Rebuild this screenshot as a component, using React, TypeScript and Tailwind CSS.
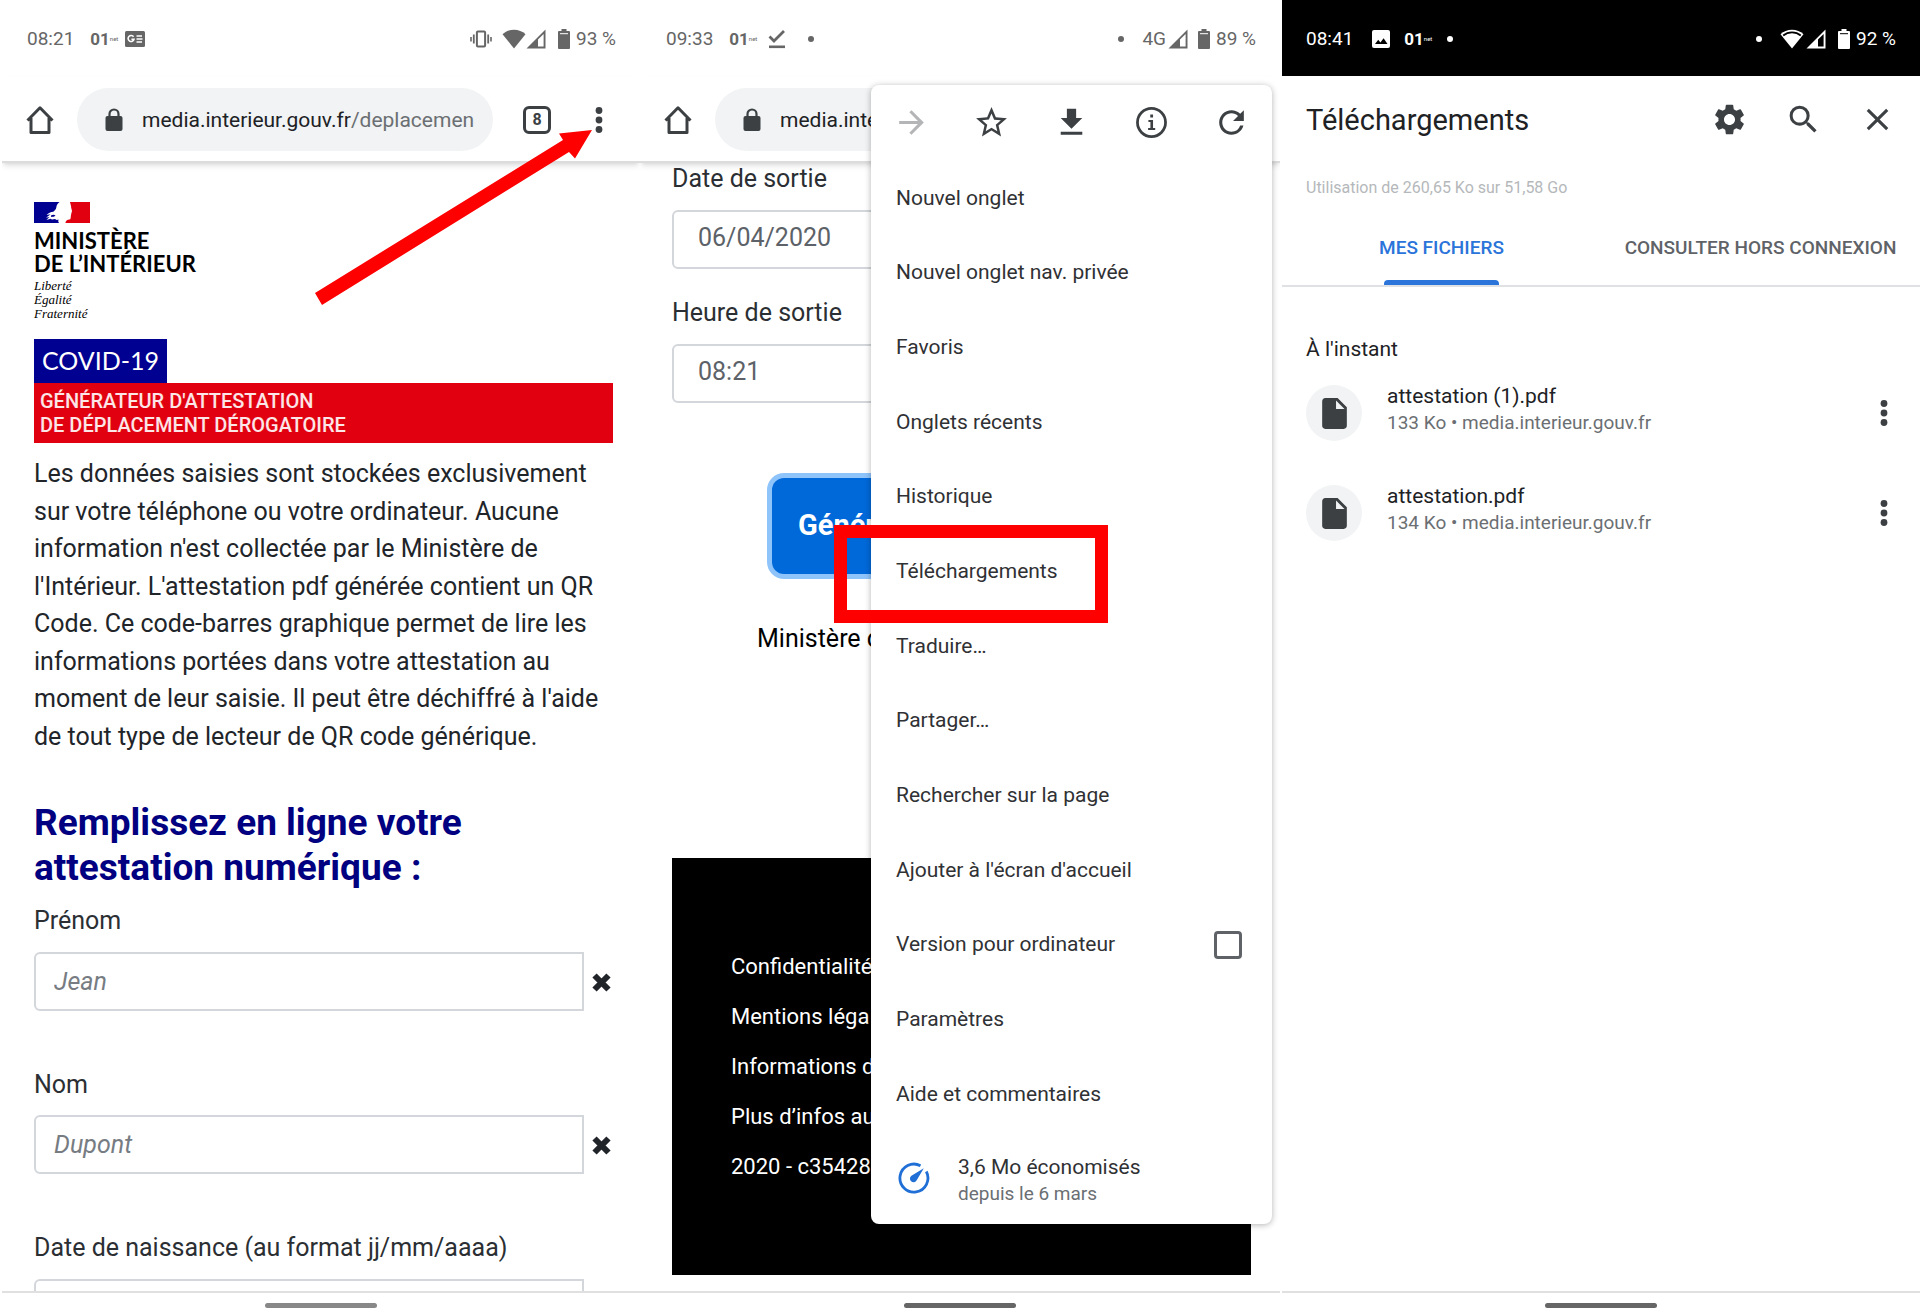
import React from 'react';
import {
  MdArrowForward,
  MdClose,
  MdInsertDriveFile,
  MdRefresh,
  MdSearch,
  MdSettings,
  MdStarBorder,
} from 'react-icons/md';

const menuItems = [
  'Nouvel onglet',
  'Nouvel onglet nav. privée',
  'Favoris',
  'Onglets récents',
  'Historique',
  'Téléchargements',
  'Traduire…',
  'Partager…',
  'Rechercher sur la page',
  "Ajouter à l'écran d'accueil",
  'Version pour ordinateur',
  'Paramètres',
  'Aide et commentaires',
];

const footerLinks = [
  'Confidentialité',
  'Mentions léga',
  'Informations d',
  'Plus d’infos au',
  '2020 - c35428',
];

const files = [
  { name: 'attestation (1).pdf', info: '133 Ko • media.interieur.gouv.fr' },
  { name: 'attestation.pdf', info: '134 Ko • media.interieur.gouv.fr' },
];

/* ---------- icons ---------- */

const HomeIcon = () => (
  <svg viewBox="0 0 28 30" className="w-7 h-[30px]" fill="none" stroke="#3c4043" strokeWidth="3">
    <path d="M1.5 15.5 14 2.8l12.5 12.7M5 13v14.5h18V13" strokeLinejoin="round" />
  </svg>
);

const LockIcon = () => (
  <svg viewBox="0 0 18 24" className="w-[18px] h-6 shrink-0">
    <rect x="0.5" y="8" width="17" height="15" rx="2" fill="#3c4043" />
    <path d="M4.5 9V6a4.5 4.5 0 0 1 9 0v3" fill="none" stroke="#3c4043" strokeWidth="2.2" />
  </svg>
);

const DotsIcon = () => (
  <svg viewBox="0 0 8 28" className="w-2 h-7" fill="#3c4043">
    <circle cx="4" cy="4.5" r="3.4" />
    <circle cx="4" cy="14" r="3.4" />
    <circle cx="4" cy="23.5" r="3.4" />
  </svg>
);

const NewsIcon = () => (
  <svg viewBox="0 0 20 16" className="w-5 h-4">
    <rect width="20" height="16" rx="1.5" fill="currentColor" />
    <path d="M8.6 5.8A3 3 0 1 0 9 8.3H6.4" fill="none" stroke="#fff" strokeWidth="1.6" />
    <path d="M11.5 5h5.5M11.5 8h6M11.5 11h5.5" stroke="#fff" strokeWidth="1.5" />
  </svg>
);

const DoneIcon = () => (
  <svg viewBox="0 0 18 20" className="w-[18px] h-5" fill="none" stroke="currentColor">
    <path d="M1.5 7.5 6 12 16 2" strokeWidth="2.8" />
    <path d="M1 17.8h16" strokeWidth="2.6" />
  </svg>
);

const PictureIcon = () => (
  <svg viewBox="0 0 18 18" className="w-[18px] h-[18px]">
    <rect width="18" height="18" rx="2" fill="currentColor" />
    <path d="m3 14 3.2-4.2 2.2 2.7 3.2-4.2L15.5 14z" fill="#000" />
  </svg>
);

const VibrateIcon = () => (
  <svg viewBox="0 0 22 18" className="w-[22px] h-[18px]" fill="none" stroke="currentColor">
    <rect x="6.9" y="1.5" width="8.2" height="15" rx="1" strokeWidth="2" />
    <path d="M3.8 4.5v9M18.2 4.5v9" strokeWidth="1.8" />
    <path d="M1 7v4.5M21 7v4.5" strokeWidth="1.6" />
  </svg>
);

const WifiIcon = ({ ringed = false }: { ringed?: boolean }) => (
  <svg viewBox="0 0 24 20" className="w-6 h-5">
    <path d="M12 19.5.5 5.2C3.5 2.2 7.6.7 12 .7s8.5 1.5 11.5 4.5z" fill="currentColor" />
    {ringed && <path d="M3.2 6.5c5-4.3 12.6-4.3 17.6 0" fill="none" stroke="#000" strokeWidth="1.8" />}
  </svg>
);

const SignalIcon = () => (
  <svg viewBox="0 0 20 20" className="w-5 h-5">
    <path d="M.5 19.5 19.5.5v19z" fill="currentColor" />
    <path d="M12 10.5 17.6 5v12.6H12z" className="fill-(--bar)" />
  </svg>
);

const BatteryIcon = () => (
  <svg viewBox="0 0 12 20" className="w-3 h-5">
    <path d="M3.5 0h5v2H11a1 1 0 0 1 1 1v16a1 1 0 0 1-1 1H1a1 1 0 0 1-1-1V3a1 1 0 0 1 1-1h2.5z" fill="currentColor" />
    <path d="M2 4.7h8" className="stroke-(--bar)" strokeWidth="1" />
  </svg>
);

const NetLogo = () => (
  <span className="flex items-center w-[23px] font-['Roboto'] font-bold text-[17px] leading-5">
    01<span className="text-[6px] font-normal">net</span>
  </span>
);

const StatusDot: React.FC<{ className: string }> = ({ className }) => (
  <span className={`w-1.5 h-1.5 rounded-full bg-current ${className}`} />
);

const DownloadIcon = () => (
  <svg viewBox="0 0 24 24" className="w-[37px] h-[37px]" fill="#3c4043">
    <path d="M19 9h-4V3H9v6H5l7 7 7-7zM5 18v2h14v-2H5z" />
  </svg>
);

const InfoIcon = () => (
  <svg viewBox="0 0 24 24" className="w-[37px] h-[37px]">
    <circle cx="12" cy="12" r="9.1" fill="none" stroke="#3c4043" strokeWidth="1.8" />
    <path d="M10 10.3h3v5.2h1.4v1.4H9.8v-1.4h1.5v-3.8H10zM11.2 6.8h1.8v1.9h-1.8z" fill="#3c4043" />
  </svg>
);

const GaugeIcon = () => (
  <svg viewBox="0 0 32 32" className="w-8 h-8">
    <path d="M22.5 3.7A14 14 0 1 0 28.3 9.5" fill="none" stroke="#1f6fd6" strokeWidth="2.8" />
    <path d="M25.8 6.2 18.7 18.3a3.6 3.6 0 1 1-5.3-4.6z" fill="#1f6fd6" />
  </svg>
);

const CrossIcon = () => (
  <svg viewBox="0 0 23 23" className="w-[23px] h-[23px]">
    <path d="m4.5 4.5 14 14M18.5 4.5l-14 14" stroke="#212529" strokeWidth="6" />
  </svg>
);

const MarianneFlag = () => (
  <svg viewBox="0 0 56 21" className="w-14 h-[21px]">
    <path
      d="M0 0h25.5c-2 1.5-3 3.5-3.2 5.5-.2 1.700-1.500 3-3 4.200-2.500.300-5 1.300-6.800 3.300l4-.800-4.500 3.500 3.500-.800-3 3 4-1.200 1.500.800 3-.500 2.500 1.500L25 21H0z"
      fill="#000091"
    />
    <path d="M17 13.500c1.500-1 3.500-1 4.500.2-1.200.8-2.800 1.300-4.300 1.200zM17.500 21l3-2.300 4-1.200-.5 3.500z" fill="#000091" />
    <path
      d="M36 0h20v21H31.500c.3-2 1.200-3.200 4.800-3.700.7-2 .3-3.300.9-5.300l.8-3c-.3-2-1-3-1-5z"
      fill="#e1000f"
    />
  </svg>
);

/* ---------- shared parts ---------- */

const HomeBar: React.FC<{ className?: string }> = ({ className = 'bg-[#666]' }) => (
  <footer className="h-[25px] shrink-0 pt-0.5 bg-white border-t-2 border-[#e0e0e0] flex items-center justify-center">
    <span className={`w-28 h-[5px] rounded-full ${className}`} />
  </footer>
);

const Toolbar: React.FC<{ url: string; path: string }> = ({ url, path }) => (
  <div className="relative z-10 flex items-center h-[87px] shrink-0 pl-6 pr-[37px] pt-0.5 bg-white border-b-2 border-[#dcdcdc] shadow-md">
    <button type="button" aria-label="Accueil">
      <HomeIcon />
    </button>
    <div className="flex items-center flex-1 min-w-0 ml-[23px] h-[63px] pl-7 pr-3.5 rounded-full bg-[#f1f3f4] text-[21px] overflow-hidden">
      <LockIcon />
      <a href="#" className="ml-[19px] pt-0.5 whitespace-nowrap text-[#202124]">
        {url}
        <span className="text-[#6b6f73]">{path}</span>
      </a>
    </div>
    <button
      type="button"
      aria-label="Onglets"
      className="ml-[30px] w-7 h-7 rounded-md border-3 border-[#3c4043] text-base leading-none font-bold text-[#3c4043]"
    >
      8
    </button>
    <button type="button" aria-label="Menu" className="ml-11">
      <DotsIcon />
    </button>
  </div>
);

const Field: React.FC<{ id: string; label: string; placeholder?: string }> = ({ id, label, placeholder }) => (
  <div className="mb-[55px]">
    <label htmlFor={id} className="block mb-3 leading-normal text-[#2b2f33]">
      {label}
    </label>
    <div className="flex items-center gap-1.5">
      <input
        id={id}
        placeholder={placeholder}
        className="flex-1 min-w-0 h-[59px] px-[18px] rounded-l-md border-2 border-[#d3d6da] placeholder:italic placeholder:text-[#767c82]"
      />
      <button type="button" aria-label={`Effacer ${label}`} className="pt-0.5">
        <CrossIcon />
      </button>
    </div>
  </div>
);

/* ---------- screens ---------- */

const FormScreen = () => (
  <section className="relative flex flex-col h-screen border-l-2 border-white overflow-hidden">
    <header className="flex items-center h-[76px] shrink-0 pl-[25px] pr-6 pt-0.5 text-[19px] text-[#666] [--bar:#fff]">
      <span>08:21</span>
      <span className="ml-4"><NetLogo /></span>
      <span className="ml-3"><NewsIcon /></span>
      <span className="ml-auto"><VibrateIcon /></span>
      <span className="ml-2.5"><WifiIcon /></span>
      <SignalIcon />
      <span className="ml-3"><BatteryIcon /></span>
      <span className="ml-1.5">93 %</span>
    </header>
    <Toolbar url="media.interieur.gouv.fr" path="/deplacemen" />

    <main className="flex-1 min-h-0 overflow-hidden pl-8 pr-[27px] pt-[39px] text-[25px] text-[#212529]">
      <MarianneFlag />
      <p className="mt-1.5 font-['Lato'] font-bold text-[22px] leading-[23px] text-black">
        MINISTÈRE
        <br />
        DE L’INTÉRIEUR
      </p>
      <p className="mt-1 mb-[18px] font-['Liberation_Serif'] italic text-[13px] leading-3.5 text-black">
        Liberté
        <br />
        Égalité
        <br />
        Fraternité
      </p>
      <h1>
        <span className="flex items-center w-fit h-11 px-2 bg-[#000091] font-['Lato'] text-white">COVID-19</span>
        <span className="block px-1.5 py-1.5 bg-[#e1000f] text-xl leading-6 font-medium text-white/90">
          GÉNÉRATEUR D'ATTESTATION
          <br />
          DE DÉPLACEMENT DÉROGATOIRE
        </span>
      </h1>
      <p className="mt-3 leading-normal">
        Les données saisies sont stockées exclusivement sur votre téléphone ou votre ordinateur. Aucune
        information n'est collectée par le Ministère de l'Intérieur. L'attestation pdf générée contient un QR
        Code. Ce code-barres graphique permet de lire les informations portées dans votre attestation au
        moment de leur saisie. Il peut être déchiffré à l'aide de tout type de lecteur de QR code générique.
      </p>
      <h2 className="mt-[45px] mb-3 text-[37px] leading-[45px] font-bold text-[#000080]">
        Remplissez en ligne votre
        <br />
        attestation numérique :
      </h2>
      <form>
        <Field id="prenom" label="Prénom" placeholder="Jean" />
        <Field id="nom" label="Nom" placeholder="Dupont" />
        <Field id="naissance" label="Date de naissance (au format jj/mm/aaaa)" />
      </form>
    </main>
    <HomeBar className="bg-[#888]" />

    {/* arrow pointing at the browser menu button */}
    <svg viewBox="0 0 280 180" className="absolute z-20 left-[311px] top-32 w-[280px] h-[180px]" fill="#ff0000">
      <path d="M2 165 250 12 246 5.5 279 2 262 30.5 256 24 9 177z" />
    </svg>
  </section>
);

const ChromeMenu = () => (
  <nav className="absolute z-20 top-[85px] bottom-[92px] right-2 w-[401px] flex flex-col rounded-lg bg-white text-[21px] text-[#303134] shadow-[0_1px_6px_rgba(0,0,0,0.3)]">
    <div className="grid grid-cols-5 h-[75px] shrink-0 justify-items-center text-[37px] text-[#3c4043]">
      <button type="button" aria-label="Avancer" className="text-[#b4b5b7]"><MdArrowForward /></button>
      <button type="button" aria-label="Ajouter aux favoris"><MdStarBorder /></button>
      <button type="button" aria-label="Télécharger"><DownloadIcon /></button>
      <button type="button" aria-label="Informations"><InfoIcon /></button>
      <button type="button" aria-label="Actualiser"><MdRefresh /></button>
    </div>
    <ul className="flex flex-col flex-1">
      {menuItems.map((item) => (
        <li key={item} className="relative flex flex-1 items-center pl-[25px] pr-6 pt-0.5">
          {item === 'Version pour ordinateur' ? (
            <label className="flex flex-1 items-center justify-between pr-1.5">
              {item}
              <input type="checkbox" className="appearance-none w-7 h-7 rounded-sm border-3 border-[#5f6368]" />
            </label>
          ) : (
            <button type="button">{item}</button>
          )}
          {item === 'Téléchargements' && (
            <span className="absolute -left-[37px] right-[164px] -top-2 -bottom-[15px] border-13 border-[#ff0000]" />
          )}
        </li>
      ))}
    </ul>
    <div className="flex items-center h-[93px] shrink-0 pl-[27px]">
      <GaugeIcon />
      <p className="ml-7 pt-1 leading-7">
        3,6 Mo économisés
        <span className="block text-[19px] leading-[26px] text-[#6b6f73]">depuis le 6 mars</span>
      </p>
    </div>
  </nav>
);

const MenuScreen = () => (
  <section className="relative flex flex-col h-screen overflow-hidden">
    <header className="flex items-center h-[76px] shrink-0 pl-[26px] pr-6 pt-0.5 text-[19px] text-[#666] [--bar:#fff]">
      <span>09:33</span>
      <span className="ml-4"><NetLogo /></span>
      <span className="ml-4"><DoneIcon /></span>
      <StatusDot className="ml-[22px]" />
      <StatusDot className="ml-auto" />
      <span className="ml-[18px]">4G</span>
      <span className="ml-0.5"><SignalIcon /></span>
      <span className="ml-2.5"><BatteryIcon /></span>
      <span className="ml-1.5">89 %</span>
    </header>
    <Toolbar url="media.interieur.gouv.fr" path="/deplacemen" />

    <main className="flex flex-col flex-1 min-h-0 overflow-hidden pl-8 pr-[29px] text-[25px] text-[#2b2f33]">
      <label htmlFor="date-sortie" className="leading-8">Date de sortie</label>
      <input
        id="date-sortie"
        defaultValue="06/04/2020"
        className="mt-[15px] mb-7 h-[59px] px-6 pb-1 rounded-md border-2 border-[#d3d6da] text-[#5c6268]"
      />
      <label htmlFor="heure-sortie" className="leading-8">Heure de sortie</label>
      <input
        id="heure-sortie"
        defaultValue="08:21"
        className="mt-[15px] h-[59px] px-6 pb-1 rounded-md border-2 border-[#d3d6da] text-[#5c6268]"
      />
      <button
        type="button"
        className="mt-[75px] mx-[100px] h-24 pl-[26px] text-left whitespace-nowrap rounded-xl bg-[#0069d9] ring-5 ring-[#8fc4fb] text-[29px] font-bold text-white"
      >
        Génér
      </button>
      <p className="mt-[46px] ml-[85px] leading-normal text-black">Ministère d</p>
      <ul className="mt-auto mb-4 pl-[59px] pt-[84px] pb-[83px] bg-black text-[22px] text-white">
        {footerLinks.map((link) => (
          <li key={link} className="h-[50px] leading-[50px]">
            <a href="#">{link}</a>
          </li>
        ))}
      </ul>
    </main>
    <HomeBar />
    <ChromeMenu />
  </section>
);

const DownloadsScreen = () => (
  <section className="flex flex-col h-screen border-l-2 border-white text-[#202124]">
    <header className="flex items-center h-[76px] shrink-0 px-6 pt-0.5 bg-black text-[19px] text-white [--bar:#000]">
      <span>08:41</span>
      <span className="ml-[19px]"><PictureIcon /></span>
      <span className="ml-3.5"><NetLogo /></span>
      <StatusDot className="ml-5" />
      <StatusDot className="ml-auto" />
      <span className="ml-[18px]"><WifiIcon ringed /></span>
      <span className="ml-0.5"><SignalIcon /></span>
      <span className="ml-3"><BatteryIcon /></span>
      <span className="ml-1.5">92 %</span>
    </header>
    <div className="flex items-center h-[87px] shrink-0 px-6 text-[#3c4043]">
      <h1 className="flex-1 pt-0.5 text-[29px] text-[#202124]">Téléchargements</h1>
      <div className="flex gap-[37px] text-[37px]">
        <button type="button" aria-label="Paramètres"><MdSettings /></button>
        <button type="button" aria-label="Rechercher"><MdSearch /></button>
        <button type="button" aria-label="Fermer"><MdClose /></button>
      </div>
    </div>
    <p className="px-6 pt-3 text-base leading-[26px] text-[#b5b8bb]">Utilisation de 260,65 Ko sur 51,58 Go</p>
    <div className="grid grid-cols-2 mt-[9px] h-[77px] border-b-2 border-[#dfe1e4] text-[19px] font-medium" role="tablist">
      <button type="button" role="tab" aria-selected="true" className="relative pt-0.5 text-[#2a74da]">
        MES FICHIERS
        <span className="absolute bottom-0 inset-x-0 mx-auto w-[115px] h-[5px] rounded-t bg-[#2a74da]" />
      </button>
      <button type="button" role="tab" aria-selected="false" className="pt-0.5 text-[#5f6368]">
        CONSULTER HORS CONNEXION
      </button>
    </div>
    <main className="flex-1 pl-6 pr-8 pt-12">
      <h2 className="text-[21px] leading-7">À l'instant</h2>
      <ul>
        {files.map((file) => (
          <li key={file.name} className="flex items-center h-[100px]">
            <span className="flex items-center justify-center w-14 h-14 rounded-full bg-[#f1f3f4] text-[37px] text-[#3c4043]">
              <MdInsertDriveFile />
            </span>
            <p className="flex-1 ml-[25px] pb-2 text-[21px] leading-7">
              {file.name}
              <span className="block text-[19px] leading-[26px] text-[#6b6f73]">{file.info}</span>
            </p>
            <button type="button" aria-label={`Options de ${file.name}`}>
              <DotsIcon />
            </button>
          </li>
        ))}
      </ul>
    </main>
    <HomeBar />
  </section>
);

const App: React.FC = () => {
  return (
    <div className="grid grid-cols-3 bg-white font-['Roboto',sans-serif]">
      <FormScreen />
      <MenuScreen />
      <DownloadsScreen />
    </div>
  );
};

export default App;
